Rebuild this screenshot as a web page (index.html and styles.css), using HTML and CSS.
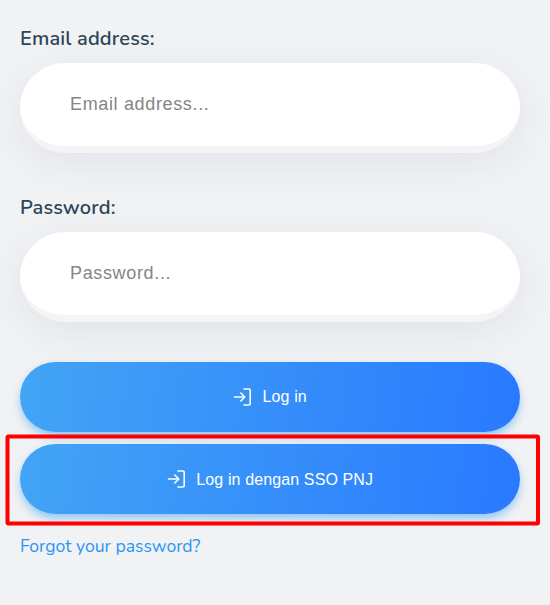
FILE: index.html
```
<!DOCTYPE html>
<html lang="en">
<head>
<meta charset="utf-8">
<title>Log in</title>
<link rel="stylesheet" href="styles.css">
</head>
<body>
<form class="login">
  <label class="label" for="email">Email address:</label>
  <input class="field" id="email" type="email" placeholder="Email address...">
  <label class="label" for="password">Password:</label>
  <input class="field" id="password" type="password" placeholder="Password...">
  <button class="button" type="button">
    <svg class="icon" viewBox="0 0 20 20"><path d="M1.500 10h10M7.800 6l4 4-4 4M11 2h5q1.200 0 1.200 1.200v13.600q0 1.200-1.200 1.200H11"/></svg>
    <span>Log in</span>
  </button>
  <div class="sso">
    <button class="button" type="button">
      <svg class="icon" viewBox="0 0 20 20"><path d="M1.500 10h10M7.800 6l4 4-4 4M11 2h5q1.200 0 1.200 1.200v13.600q0 1.200-1.200 1.200H11"/></svg>
      <span class="sso-text">Log in dengan SSO PNJ</span>
    </button>
    <svg class="highlight" viewBox="0 0 536 93"><rect x="2.500" y="2.500" width="530.500" height="87" rx="1"/></svg>
  </div>
  <a class="forgot">Forgot your password?</a>
</form>
</body>
</html>
```
FILE: styles.css
```
* { box-sizing: border-box; }
body {
  margin: 0;
  height: 605px;
  overflow: hidden;
  background: #f1f2f4;
  font-family: Nunito, "Open Sans", sans-serif;
}
.login {
  display: flex;
  flex-direction: column;
  width: 500px;
  margin: 24px 0 0 20px;
}
.label {
  height: 28px;
  margin-bottom: 11px;
  font-size: 20px;
  font-weight: 600;
  letter-spacing: 0.15px;
  line-height: 29px;
  color: #2c4557;
}
.field {
  width: 500px;
  height: 90px;
  margin: 0 0 40px;
  padding: 0 50px;
  border: 0;
  border-bottom: 7px solid #f4f4f4;
  border-radius: 45px;
  background: #fff;
  box-shadow: 0 10px 40px rgba(44, 69, 97, 0.08);
  font-family: "Liberation Sans", Arial, sans-serif;
  font-size: 18px;
  letter-spacing: 0.65px;
}
.field::placeholder { color: #858585; opacity: 1; }
.button {
  display: flex;
  align-items: center;
  justify-content: center;
  gap: 9.5px;
  width: 500px;
  height: 70px;
  padding: 0;
  border: 0;
  border-radius: 35px;
  background: linear-gradient(98deg, #42a5f5, #2979ff);
  box-shadow: 0 5px 10px -1px rgba(33, 150, 243, 0.5);
  color: #fff;
  font-family: "Liberation Sans", Arial, sans-serif;
  font-size: 16px;
  letter-spacing: 0.12px;
}
.icon {
  width: 20px;
  height: 20px;
  fill: none;
  stroke: #fff;
  stroke-width: 1.600;
  stroke-linecap: round;
  stroke-linejoin: round;
}
.sso {
  position: relative;
  margin-top: 12px;
}
.sso-text { padding-top: 2px; }
.highlight {
  position: absolute;
  left: -15px;
  top: -10px;
  width: 536px;
  height: 93px;
  fill: none;
  stroke: #f00;
  stroke-width: 4;
}
.forgot {
  margin-top: 20px;
  font-size: 17.6px;
  font-weight: 400;
  line-height: 25px;
  color: #2b95f5;
}
```
